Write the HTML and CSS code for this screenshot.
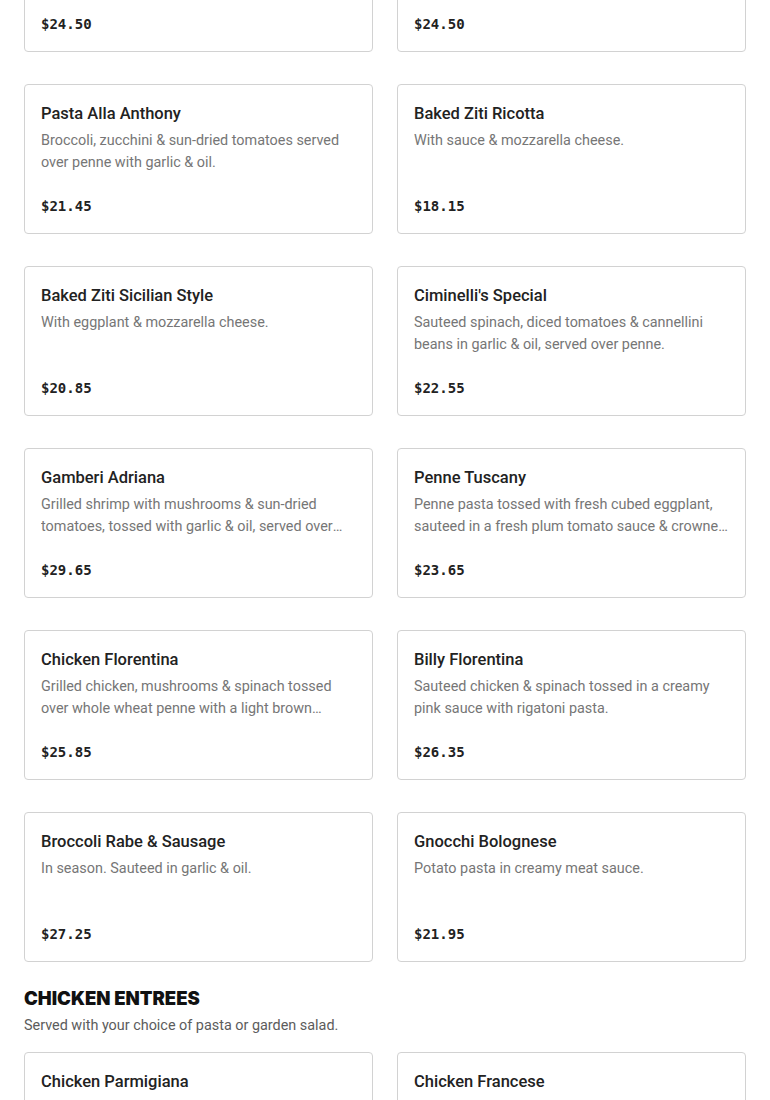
FILE: index.html
```html
<!DOCTYPE html>
<html>
<head>
<meta charset="utf-8">
<link rel="stylesheet" href="styles.css">
</head>
<body>
<main class="menu">
  <section class="section section-first">
    <div class="grid">
      <div class="card"><h3 class="title">Penne Vodka</h3><p class="desc">Penne pasta in a creamy vodka sauce.</p><div class="price">$24.50</div></div>
      <div class="card"><h3 class="title">Linguine Clams</h3><p class="desc">White or red clam sauce over linguine.</p><div class="price">$24.50</div></div>
      <div class="card"><h3 class="title">Pasta Alla Anthony</h3><p class="desc">Broccoli, zucchini &amp; sun-dried tomatoes served over penne with garlic &amp; oil.</p><div class="price">$21.45</div></div>
      <div class="card"><h3 class="title">Baked Ziti Ricotta</h3><p class="desc">With sauce &amp; mozzarella cheese.</p><div class="price">$18.15</div></div>
      <div class="card"><h3 class="title">Baked Ziti Sicilian Style</h3><p class="desc">With eggplant &amp; mozzarella cheese.</p><div class="price">$20.85</div></div>
      <div class="card"><h3 class="title">Ciminelli's Special</h3><p class="desc">Sauteed spinach, diced tomatoes &amp; cannellini beans in garlic &amp; oil, served over penne.</p><div class="price">$22.55</div></div>
      <div class="card"><h3 class="title">Gamberi Adriana</h3><p class="desc">Grilled shrimp with mushrooms &amp; sun-dried tomatoes, tossed with garlic &amp; oil, served over linguine.</p><div class="price">$29.65</div></div>
      <div class="card"><h3 class="title">Penne Tuscany</h3><p class="desc">Penne pasta tossed with fresh cubed eggplant, sauteed in a fresh plum tomato sauce &amp; crowned with mozzarella.</p><div class="price">$23.65</div></div>
      <div class="card"><h3 class="title">Chicken Florentina</h3><p class="desc">Grilled chicken, mushrooms &amp; spinach tossed over whole wheat penne with a light brown sauce.</p><div class="price">$25.85</div></div>
      <div class="card"><h3 class="title">Billy Florentina</h3><p class="desc">Sauteed chicken &amp; spinach tossed in a creamy pink sauce with rigatoni pasta.</p><div class="price">$26.35</div></div>
      <div class="card"><h3 class="title">Broccoli Rabe &amp; Sausage</h3><p class="desc">In season. Sauteed in garlic &amp; oil.</p><div class="price">$27.25</div></div>
      <div class="card"><h3 class="title">Gnocchi Bolognese</h3><p class="desc">Potato pasta in creamy meat sauce.</p><div class="price">$21.95</div></div>
    </div>
  </section>
  <section class="section">
    <h2 class="section-title">CHICKEN ENTREES</h2>
    <p class="section-sub">Served with your choice of pasta or garden salad.</p>
    <div class="grid">
      <div class="card"><h3 class="title">Chicken Parmigiana</h3><p class="desc">Breaded chicken cutlet topped with sauce &amp; mozzarella cheese.</p><div class="price">$24.95</div></div>
      <div class="card"><h3 class="title">Chicken Francese</h3><p class="desc">Egg-battered chicken in a lemon, butter &amp; white wine sauce.</p><div class="price">$24.95</div></div>
    </div>
  </section>
</main>
</body>
</html>
```

FILE: styles.css
```css
* { box-sizing: border-box; }
html, body { margin: 0; padding: 0; background: #fff; }
body {
  font-family: Roboto, "Liberation Sans", sans-serif;
  color: #222;
  overflow: hidden;
}
.menu { padding: 0 24px; }
.section-first { margin-top: -98px; }
.section { margin-bottom: 22px; }
.grid {
  display: grid;
  grid-template-columns: 349px 349px;
  column-gap: 24px;
  row-gap: 32px;
}
.card {
  border: 1px solid #d2d2d2;
  border-radius: 4px;
  padding: 17px 16px 16px;
  height: 150px;
  display: flex;
  flex-direction: column;
}
.title {
  margin: 0;
  font-size: 16.5px;
  line-height: 24px;
  font-weight: 500;
  color: #222;
}
.desc {
  margin: 4px 0 0;
  font-size: 14.4px;
  line-height: 22px;
  color: #767676;
  height: 44px;
  display: -webkit-box;
  -webkit-line-clamp: 2;
  -webkit-box-orient: vertical;
  overflow: hidden;
}
.price {
  margin-top: 21px;
  font-family: "DejaVu Sans Mono", "Liberation Mono", monospace;
  font-weight: bold;
  font-size: 14px;
  line-height: 22px;
  color: #222;
}
.section-title {
  margin: 0;
  font-family: Inter, "Liberation Sans", sans-serif;
  font-weight: 900;
  font-size: 18.5px;
  line-height: 28px;
  color: #111;
}
.section-sub {
  margin: 3px 0 15px;
  font-size: 14.4px;
  line-height: 22px;
  color: #5c5c5c;
}
```
